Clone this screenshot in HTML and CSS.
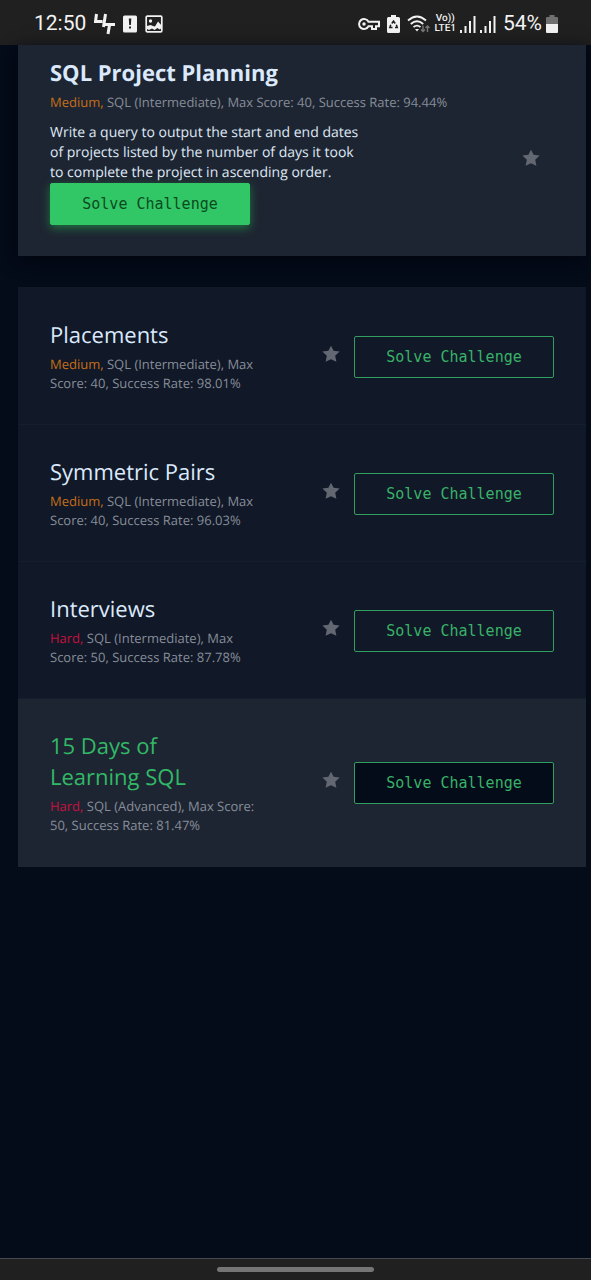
FILE: index.html
```html
<!DOCTYPE html>
<html lang="en">
<head>
<meta charset="utf-8">
<meta name="viewport" content="width=device-width, initial-scale=1">
<title>SQL Challenges</title>
<link rel="stylesheet" href="styles.css">
</head>
<body>
<svg class="defs" aria-hidden="true"><symbol id="star" viewBox="0 0 18 18"><path d="M9 .8l2.600 5 6 .8-4.400 4.100 1.200 6L9 14.200l-5.400 2.500 1.200-6L.4 6.600l6-.8z"/></symbol></svg>
<header class="status">
  <div class="status-left">
    <span class="clock">12:50</span>
    <svg width="21" height="22" viewBox="0 0 21 22" fill="none" stroke="#f2f2f2" stroke-width="3"><path d="M2.500 1L1.500 8.500h7M11.500 1L9.500 14M9.500 11.500H21M15.500 12l-1.500 9"/></svg>
    <svg width="14" height="18" viewBox="0 0 14 18"><rect width="14" height="17" y=".5" rx="1.500" fill="#f2f2f2"/><path d="M5.800 3.500h2.500l-.4 6.500H6.200zM6 11.500h2v2H6z" fill="#202020"/></svg>
    <svg width="18" height="18" viewBox="0 0 18 18"><rect x="1.200" y="1.200" width="15.600" height="15.600" rx="1" fill="none" stroke="#f2f2f2" stroke-width="1.700"/><circle cx="5.500" cy="6" r="1.700" fill="#f2f2f2"/><path d="M2 11l3.500-1L8 11l2 .5 3-5 4 4.500v2l-2.500 1.500-2-1.500-3 2-2.500-1.500L4 15l-2-1z" fill="#f2f2f2"/></svg>
  </div>
  <div class="status-right">
    <svg class="key" width="22" height="14" viewBox="0 0 22 14" fill="none" stroke="#f2f2f2" stroke-width="2"><path d="M10.500 4.700A5 5 0 1 0 10.500 9.300H14V12h4V9.300h3V4.700z"/><circle cx="6" cy="7" r="1.700" fill="#f2f2f2" stroke="none"/></svg>
    <svg class="saver" width="13" height="18" viewBox="0 0 13 18"><path d="M4 0h5v2h2.500Q13 2 13 3.500v13Q13 18 11.500 18h-10Q0 18 0 16.500v-13Q0 2 1.500 2H4z" fill="#f2f2f2"/><path d="M4.800 8.500l1.700-2.500 1.700 2.500M9.300 9.700l1 2.800H8M5.500 12.500H2.800l1-2.800" fill="none" stroke="#202020" stroke-width="1.500"/></svg>
    <svg width="23" height="18" viewBox="0 0 23 18" fill="none" stroke="#f2f2f2" stroke-width="1.800"><path d="M1 5.500Q10 -2.500 19 5.500M3.800 9Q10 3.500 16.200 9M6.500 12.200Q10 9 13.500 12.200"/><path d="M8 14h4l-2 2.500z" fill="#f2f2f2" stroke="none"/><path d="M16 10.500v6M14 14.500l2 2 2-2M20.500 17v-6M18.500 13l2-2 2 2" stroke="#777" stroke-width="1.400"/></svg>
    <span class="volte"><span>Vo))</span><span>LTE1</span></span>
    <svg width="16" height="17" viewBox="0 0 16 17" fill="#f2f2f2"><path d="M0 14h2v3H0zM4.500 10h2v7h-2zM9 5h2v12H9zM13.500 0h2v17h-2z"/></svg>
    <svg class="signal" width="16" height="17" viewBox="0 0 16 17" fill="#f2f2f2"><path d="M0 14h2v3H0zM4.500 10h2v7h-2zM9 5h2v12H9zM13.500 0h2v17h-2z"/></svg>
    <span class="clock">54%</span>
    <svg width="12" height="18" viewBox="0 0 12 18"><path d="M3.500 0h5v2H11q1 0 1 1v6H0V3q0-1 1-1h2.500z" fill="#707070"/><path d="M0 9h12v8q0 1-1 1H1q-1 0-1-1z" fill="#f2f2f2"/></svg>
  </div>
</header>
<main class="page">
  <article class="featured">
    <div class="featured-body">
      <h2 class="title title-bold">SQL Project Planning</h2>
      <p class="meta"><span class="medium">Medium,</span> SQL (Intermediate), Max Score: 40, Success Rate: 94.44%</p>
      <p class="description">Write a query to output the start and end dates of projects listed by the number of days it took to complete the project in ascending order.</p>
      <button class="solve solve-primary" type="button">Solve Challenge</button>
    </div>
    <button class="star featured-star" type="button" aria-label="Bookmark SQL Project Planning"><svg><use href="#star"/></svg></button>
  </article>
  <section class="list">
    <article class="row">
      <div class="info"><h2 class="title">Placements</h2><p class="meta"><span class="medium">Medium,</span> SQL (Intermediate), Max Score: 40, Success Rate: 98.01%</p></div>
      <button class="star" type="button" aria-label="Bookmark Placements"><svg><use href="#star"/></svg></button>
      <button class="solve" type="button">Solve Challenge</button>
    </article>
    <article class="row">
      <div class="info"><h2 class="title">Symmetric Pairs</h2><p class="meta"><span class="medium">Medium,</span> SQL (Intermediate), Max Score: 40, Success Rate: 96.03%</p></div>
      <button class="star" type="button" aria-label="Bookmark Symmetric Pairs"><svg><use href="#star"/></svg></button>
      <button class="solve" type="button">Solve Challenge</button>
    </article>
    <article class="row">
      <div class="info"><h2 class="title">Interviews</h2><p class="meta"><span class="hard">Hard,</span> SQL (Intermediate), Max Score: 50, Success Rate: 87.78%</p></div>
      <button class="star" type="button" aria-label="Bookmark Interviews"><svg><use href="#star"/></svg></button>
      <button class="solve" type="button">Solve Challenge</button>
    </article>
    <article class="row row-active">
      <div class="info"><h2 class="title">15 Days of Learning SQL</h2><p class="meta"><span class="hard">Hard,</span> SQL (Advanced), Max Score: 50, Success Rate: 81.47%</p></div>
      <button class="star" type="button" aria-label="Bookmark 15 Days of Learning SQL"><svg><use href="#star"/></svg></button>
      <button class="solve" type="button">Solve Challenge</button>
    </article>
  </section>
</main>
<footer class="nav"><div class="handle"></div></footer>
</body>
</html>
```
FILE: styles.css
```css
* { box-sizing: border-box; }
body {
  margin: 0;
  min-height: 100vh;
  display: flex;
  flex-direction: column;
  background: #040b19;
  font-family: "Open Sans", sans-serif;
  color: #dfe8f5;
  text-rendering: geometricPrecision;
}
h2, p { margin: 0; }
button { font: inherit; cursor: pointer; }
.defs { display: none; }

.status {
  display: flex;
  justify-content: space-between;
  align-items: center;
  height: 45px;
  padding: 3px 33px 0 34px;
  background: #202020;
  color: #f2f2f2;
  font-family: Roboto, sans-serif;
}
.status-left, .status-right { display: flex; align-items: center; }
.status-left { gap: 8px; }
.status-right { gap: 4px; }
.status svg { flex: none; }
.key, .saver, .signal { margin-right: 3px; }
.clock { font-size: 21px; line-height: 24px; }
.volte {
  display: flex;
  flex-direction: column;
  align-items: center;
  font-size: 10px;
  font-weight: 500;
  line-height: 10px;
}

.page { flex: 1; padding: 0 5px 0 18px; }
.title { font-size: 22px; line-height: 31px; font-weight: 400; color: #dbe9fc; }
.title-bold { font-weight: 700; }
.meta { margin-top: 4px; font-size: 13px; line-height: 19px; color: #868d99; }
.medium { color: #c66f17; }
.hard { color: #c4123f; }
.description { max-width: 318px; margin-top: 11px; font-size: 14px; line-height: 20px; }

.featured {
  display: flex;
  align-items: center;
  padding: 13px 32px 31px;
  background: #1e2532;
  box-shadow: 0 4px 16px #02060f;
}
.featured-body { flex: 1; }
.featured-star { margin: 38px 14px 0 0; }
.star {
  display: flex;
  flex: none;
  padding: 0 0 6px;
  border: 0;
  background: none;
  fill: #626772;
}
.star svg { width: 18px; height: 18px; }

.solve {
  display: block;
  flex: none;
  width: 200px;
  height: 42px;
  padding: 0;
  border: 1px solid #2f9e5f;
  border-radius: 2px;
  background: transparent;
  color: #38b268;
  font-family: "DejaVu Sans Mono", monospace;
  font-size: 15px;
}
.solve-primary {
  border-color: #32c766;
  background: #32c766;
  color: #0b4a1e;
  box-shadow: 0 3px 10px rgba(36, 170, 78, .6);
}

.list {
  position: relative;
  margin-top: 31px;
  border-top: 1px solid #111827;
}
.row {
  display: flex;
  align-items: center;
  gap: 14px;
  padding: 32px 32px 31px;
  border-bottom: 1px solid #151e2d;
  background: #111827;
}
.info { flex: 1; }
.info .title { max-width: 200px; }
.info .meta { max-width: 212px; }
.row-active { background: #1e2532; border-color: #1e2532; }
.row-active .title { color: #32b866; }
.row-active .solve { background: #040b19; }

.nav {
  display: flex;
  justify-content: center;
  height: 22px;
  padding-top: 8px;
  border-top: 1px solid #484a50;
  background: #202020;
}
.handle { width: 157px; height: 5px; border-radius: 3px; background: #757575; }
```
